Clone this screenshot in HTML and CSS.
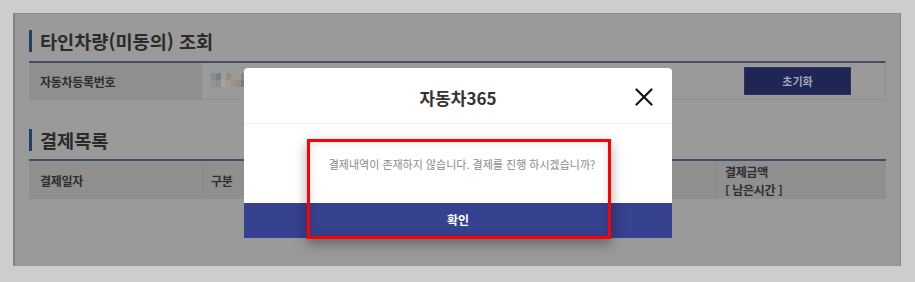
FILE: index.html
```html
<!DOCTYPE html>
<html lang="ko">
<head>
<meta charset="utf-8">
<title>타인차량(미동의) 조회</title>
<link rel="stylesheet" href="styles.css">
</head>
<body>
<div class="page">
  <h2 class="heading">타인차량(미동의) 조회</h2>
  <div class="table search">
    <div class="cell label">자동차등록번호</div>
    <div class="cell value">
      <div class="plate">
        <span class="px" style="background:#8c8c8c"></span><span class="px" style="background:#7a7f86"></span><span class="px" style="background:#9d9d9d"></span><span class="px" style="background:#8e8b88"></span><span class="px" style="background:#a3978a"></span><span class="px" style="background:#9a9a9a"></span><span class="px" style="background:#8a8682"></span>
        <span class="px" style="background:#979390"></span><span class="px" style="background:#8a8f96"></span><span class="px" style="background:#a2a4a8"></span><span class="px" style="background:#a69b8f"></span><span class="px" style="background:#9b938a"></span><span class="px" style="background:#928b84"></span><span class="px" style="background:#7f7d7b"></span>
      </div>
      <button class="reset" type="button">초기화</button>
    </div>
  </div>
  <h2 class="heading second">결제목록</h2>
  <div class="table list">
    <div class="cell head">결제일자</div>
    <div class="cell head mid">구분</div>
    <div class="cell head amount">결제금액<br>[ 남은시간 ]</div>
  </div>
</div>

<div class="modal">
  <div class="modal-head">
    <span class="modal-title">자동차365</span>
    <button class="close" type="button" aria-label="닫기">
      <svg width="18" height="18" viewBox="0 0 18 18"><path d="M1.5 1.5 L16.5 16.5 M16.5 1.5 L1.5 16.5" stroke="#141414" stroke-width="2.2" fill="none" stroke-linecap="round"/></svg>
    </button>
  </div>
  <div class="modal-body">결제내역이 존재하지 않습니다. 결제를 진행 하시겠습니까?</div>
  <button class="confirm" type="button">확인</button>
</div>
<div class="highlight"></div>
</body>
</html>
```
FILE: styles.css
```css
* { box-sizing: border-box; }
html, body { margin: 0; padding: 0; }
body {
  background: #cdcdcd;
  font-family: "Noto Sans CJK KR", "Noto Sans", sans-serif;
  width: 915px;
  height: 282px;
  overflow: hidden;
}
.page {
  margin: 13px 0 0 13px;
  width: 888px;
  height: 253px;
  background: #9a9a9a;
  border-left: 2px solid #818181;
  border-top: 1px solid #898989;
  border-right: 1px solid #888888;
  padding: 16px 14px 0 14px;
}
.heading {
  margin: 0;
  height: 22px;
  line-height: 22px;
  border-left: 3px solid #223f6b;
  padding-left: 8px;
  font-size: 18.6px;
  font-weight: 700;
  color: #2b2b2b;
  letter-spacing: 0;
}
.heading.second { margin-top: 29px; }
.table {
  display: grid;
  border-top: 2px solid #414e66;
  margin-top: 9px;
}
.search {
  grid-template-columns: 173px 1fr;
  height: 39px;
  border-bottom: 1px solid #8f8f8f;
  border-right: 1px solid #8f8f8f;
}
.cell {
  display: flex;
  align-items: center;
  font-size: 12px;
  font-weight: 700;
  color: #2e2e2e;
  letter-spacing: -0.3px;
}
.label {
  background: #8f8f8f;
  padding-left: 11px;
}
.value {
  justify-content: space-between;
  padding: 0 34px 0 9px;
}
.plate {
  display: grid;
  grid-template-columns: repeat(7, 5px);
  grid-auto-rows: 7px;
  margin-top: -2px;
}
.px { display: block; }
.reset {
  width: 107px;
  height: 28px;
  background: #1f2656;
  border: 1px solid #2c3362;
  color: #a3a7bb;
  font-family: inherit;
  font-size: 11px;
  font-weight: 700;
  padding: 0;
}
.list {
  grid-template-columns: 173px 1fr 171px;
  height: 40px;
  margin-top: 8px;
  background: #8f8f8f;
}
.head { padding-left: 11px; }
.mid {
  border-left: 1px solid #878787;
  padding-left: 8px;
}
.amount {
  border-left: 1px solid #878787;
  padding-left: 9px;
  line-height: 18px;
  padding-top: 1px;
}

.modal {
  position: absolute;
  left: 244px;
  top: 68px;
  width: 428px;
  height: 170px;
  background: #ffffff;
  border-radius: 4px 4px 0 0;
  display: flex;
  flex-direction: column;
}
.modal-head {
  height: 56px;
  border-bottom: 1px solid #eef0f3;
  display: flex;
  align-items: center;
  justify-content: center;
  position: relative;
  padding-top: 4px;
}
.modal-title {
  font-size: 17px;
  font-weight: 700;
  color: #333333;
}
.close {
  position: absolute;
  right: 19px;
  top: 20px;
  width: 18px;
  height: 18px;
  padding: 0;
  border: 0;
  background: none;
  display: block;
}
.close svg { display: block; }
.modal-body {
  flex: 1;
  display: flex;
  align-items: center;
  justify-content: center;
  font-size: 11px;
  color: #8a8a8a;
  letter-spacing: 0;
  padding-left: 8px;
}
.confirm {
  height: 35px;
  border: 0;
  background: #36418f;
  color: #ffffff;
  font-family: inherit;
  font-size: 12px;
  font-weight: 700;
  padding: 0 0 2px 0;
}
.highlight {
  position: absolute;
  left: 307px;
  top: 139px;
  width: 304px;
  height: 100px;
  border: 3px solid #ff0000;
  box-shadow: 0 5px 12px rgba(0, 0, 0, 0.35), inset 0 0 10px rgba(0, 0, 0, 0.12);
}
```
